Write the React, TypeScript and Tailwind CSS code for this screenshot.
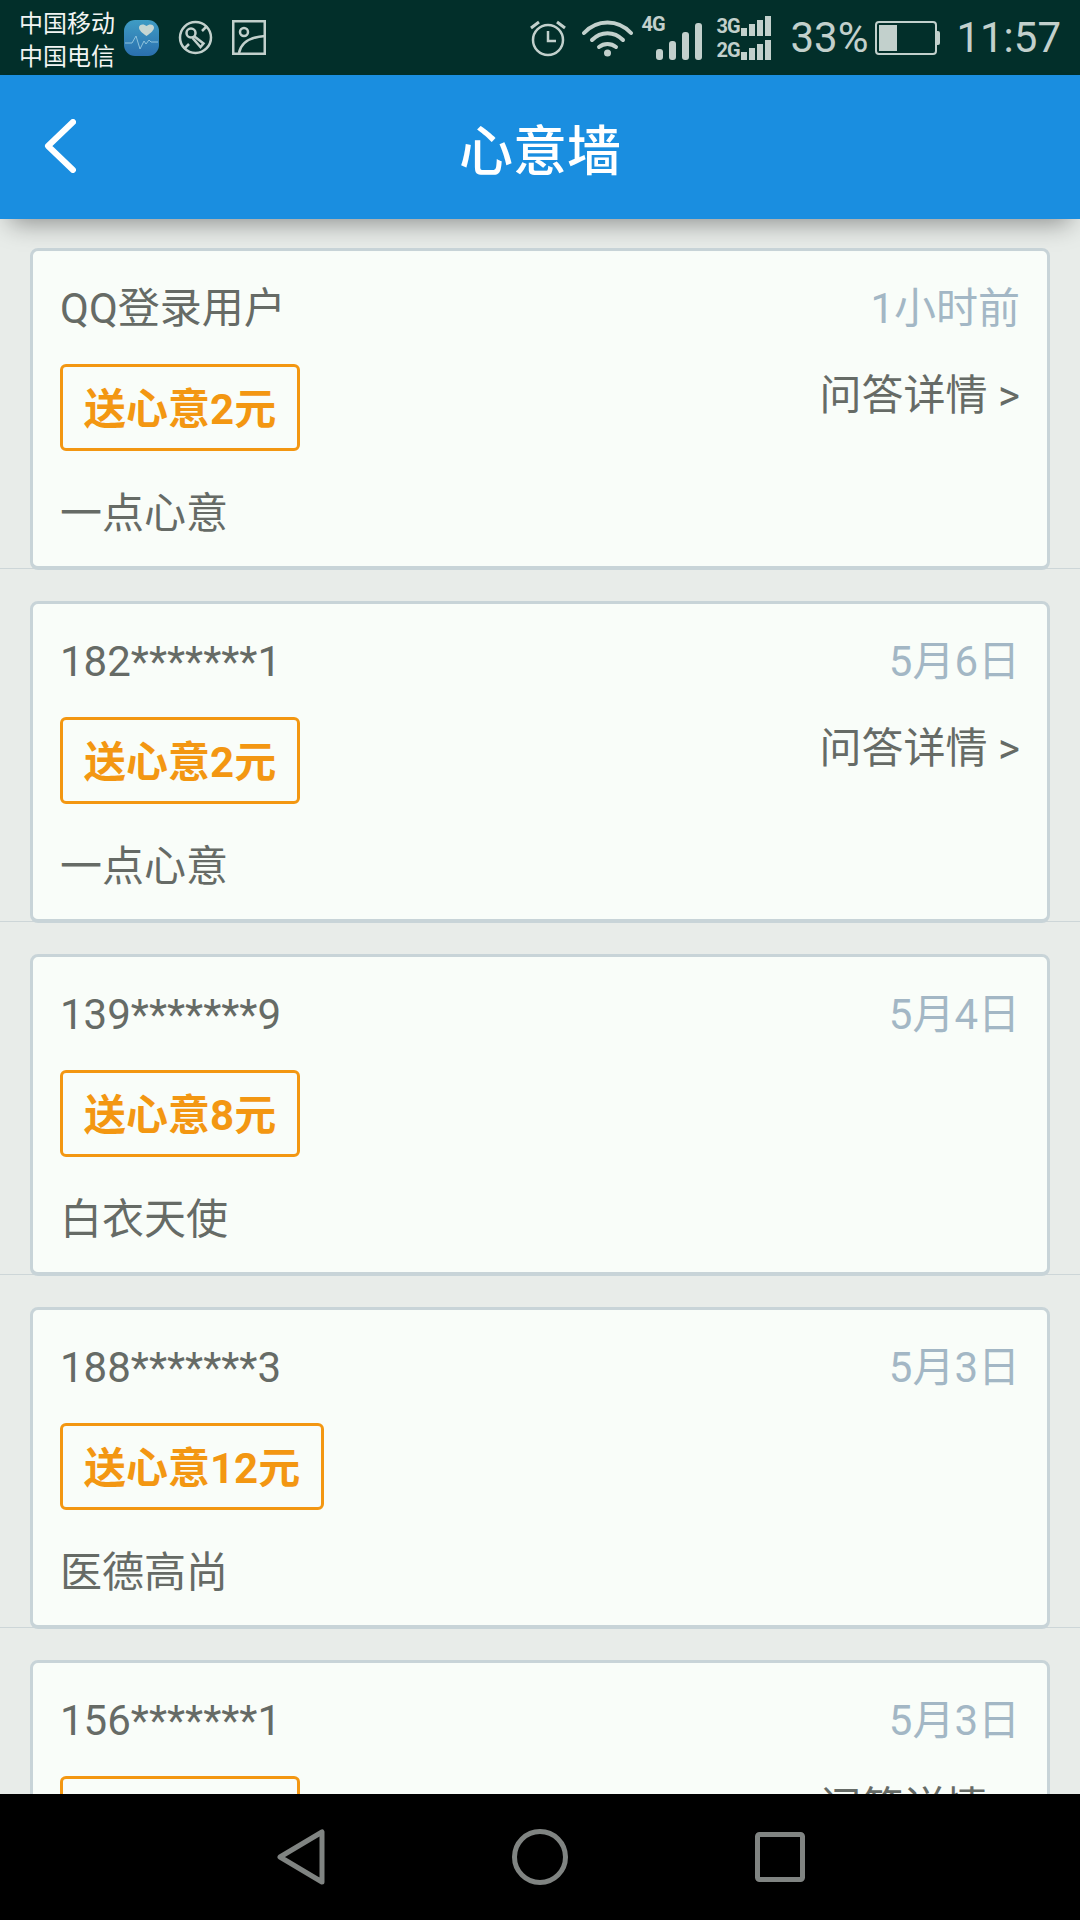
interface Thanks {
	name: string;
	time: string;
	amount: number;
	message: string;
	hasDetail: boolean;
}

const items: Thanks[] = [
	{ name: "QQ登录用户", time: "1小时前", amount: 2, message: "一点心意", hasDetail: true },
	{ name: "182*******1", time: "5月6日", amount: 2, message: "一点心意", hasDetail: true },
	{ name: "139*******9", time: "5月4日", amount: 8, message: "白衣天使", hasDetail: false },
	{ name: "188*******3", time: "5月3日", amount: 12, message: "医德高尚", hasDetail: false },
	{ name: "156*******1", time: "5月3日", amount: 2, message: "一点心意", hasDetail: true },
];

function HealthIcon() {
	return (
		<svg width="35" height="36" viewBox="0 0 35 36">
			<defs>
				<linearGradient id="health" x1="0" y1="0" x2="0" y2="1">
					<stop offset="0" stopColor="#3f9cc4" />
					<stop offset="1" stopColor="#2a6fae" />
				</linearGradient>
			</defs>
			<rect width="35" height="36" rx="11" fill="url(#health)" />
			<path d="M22.500 16c-5-3.500-7.500-6-7.500-8.500 0-3.500 5-4 7.500-1.500 2.500-2.500 7.500-2 7.500 1.500 0 2.500-2.500 5-7.500 8.500z" fill="#c6d6d2" />
			<path d="M1 23h7l4-7 4 13 4-8 2 3 3-4 2 2h7" fill="none" stroke="#8fc3dd" strokeWidth="1" />
		</svg>
	);
}

function KeyIcon() {
	return (
		<svg width="35" height="35" viewBox="0 0 35 35" fill="none" stroke="#c2d0cc" strokeWidth="2.500">
			<circle cx="17.500" cy="17.500" r="15.500" />
			<circle cx="13" cy="13" r="4.500" />
			<path d="M16.500 16.500l9 7-3 3.500-8-9M6 29l5-5M24 11l5-5" />
		</svg>
	);
}

function PictureIcon() {
	return (
		<svg width="34" height="35" viewBox="0 0 34 35" fill="none" stroke="#c2d0cc" strokeWidth="2.500">
			<rect x="1.250" y="1.250" width="31.500" height="32.500" />
			<circle cx="12" cy="12" r="4" />
			<path d="M7 33c2-10 10-16 26-17" />
		</svg>
	);
}

function AlarmIcon() {
	return (
		<svg width="36" height="38" viewBox="0 0 36 38" fill="none" stroke="#c2d0cc" strokeWidth="2.500">
			<circle cx="18" cy="21" r="15" />
			<path d="M18 12v10h8" />
			<path d="M1 9l8-6M35 9l-8-6" strokeWidth="3" />
		</svg>
	);
}

function WifiIcon() {
	return (
		<svg width="51" height="38" viewBox="0 0 51 38" fill="none" stroke="#c2d0cc" strokeWidth="4" strokeLinecap="round">
			<path d="M2 14c13-14 34-14 47 0" />
			<path d="M10 21c9-9 22-9 31 0" />
			<path d="M17 28c5-4 12-4 17 0" />
			<circle cx="25.500" cy="34" r="3.500" fill="#c2d0cc" stroke="none" />
		</svg>
	);
}

function BackIcon() {
	return (
		<svg width="32" height="54" viewBox="0 0 32 54" fill="none" stroke="#ffffff" strokeWidth="6" strokeLinecap="round" strokeLinejoin="round">
			<path d="M29 3L4 27l25 24" />
		</svg>
	);
}

function SmallBars() {
	return (
		<div className="flex items-end gap-[2px]">
			<span className="h-[8px] w-[6px] bg-[#c2d0cc]" />
			<span className="h-[12px] w-[6px] bg-[#c2d0cc]" />
			<span className="h-[16px] w-[6px] bg-[#c2d0cc]" />
			<span className="h-[20px] w-[6px] bg-[#c2d0cc]" />
		</div>
	);
}

function StatusBar() {
	return (
		<div className="flex h-[75px] shrink-0 items-center bg-[#022f2a] pl-[19px] pr-[19px] font-['Roboto',sans-serif]">
			<div className="flex w-[105px] flex-col text-[24px] leading-[33px] text-[#f2f5f3] font-['Noto_Sans_CJK_SC',sans-serif]">
				<span>中国移动</span>
				<span>中国电信</span>
			</div>
			<div className="flex items-center gap-[19px]">
				<HealthIcon />
				<KeyIcon />
				<PictureIcon />
			</div>
			<div className="ml-auto flex items-center text-[#c2d0cc]">
				<AlarmIcon />
				<div className="ml-[16px]">
					<WifiIcon />
				</div>
				<div className="relative ml-[10px] flex h-[44px] w-[59px] items-end justify-end">
					<span className="absolute left-[-2px] top-[-2px] text-[20px] font-bold leading-[20px] tracking-[-1px]">4G</span>
					<div className="flex items-end gap-[6px]">
						<span className="h-[11px] w-[7px] rounded-[3px] bg-[#c2d0cc]" />
						<span className="h-[19px] w-[7px] rounded-[3px] bg-[#c2d0cc]" />
						<span className="h-[28px] w-[7px] rounded-[3px] bg-[#c2d0cc]" />
						<span className="h-[37px] w-[7px] rounded-[3px] bg-[#c2d0cc]" />
					</div>
				</div>
				<div className="ml-[14px] flex flex-col gap-[4px]">
					<div className="flex items-end">
						<span className="w-[25px] text-[20px] font-bold leading-[19px] tracking-[-1px]">3G</span>
						<SmallBars />
					</div>
					<div className="flex items-end">
						<span className="w-[25px] text-[20px] font-bold leading-[19px] tracking-[-1px]">2G</span>
						<SmallBars />
					</div>
				</div>
				<span className="ml-[19px] text-[42px] leading-none">33%</span>
				<div className="ml-[7px] flex items-center">
					<div className="flex h-[34px] w-[62px] items-center rounded-[4px] border-[2px] border-[#c2d0cc] p-[2px]">
						<div className="h-full w-[18px] bg-[#c2d0cc]" />
					</div>
					<div className="h-[14px] w-[3px] rounded-r-[2px] bg-[#c2d0cc]" />
				</div>
				<span className="ml-[16px] text-[42px] leading-none">11:57</span>
			</div>
		</div>
	);
}

function Header() {
	return (
		<div className="relative z-10 flex h-[144px] shrink-0 items-center justify-center bg-[#1a8ee0] shadow-[0_14px_24px_-10px_rgba(0,0,0,0.4)]">
			<div className="absolute left-[44px] top-[44px]">
				<BackIcon />
			</div>
			<h1 className="text-[54px] font-medium text-white font-['Noto_Sans_CJK_SC',sans-serif]">心意墙</h1>
		</div>
	);
}

function Card({ item }: { item: Thanks }) {
	return (
		<div className="mb-[2px] shrink-0 border-b-[1px] border-[#cdd6d8] px-[30px] pt-[30px]">
			<div className="relative -mb-[2px] flex h-[322px] justify-between rounded-[8px] border-[3px] border-b-[4px] border-[#c8d4d8] bg-[#f9fdf9] px-[27px] pt-[30px]">
				<div className="flex flex-col items-start">
					<p className="text-[42px] leading-[56px] text-[#666b66]">{item.name}</p>
					<span className="mt-[27px] flex h-[87px] items-center rounded-[6px] border-[3px] border-[#f39712] px-[21px] pt-[4px] text-[42px] font-bold text-[#f39712]">
						送心意{item.amount}元
					</span>
					<p className="mt-[35px] text-[42px] leading-[56px] text-[#666b66]">{item.message}</p>
				</div>
				<div className="flex flex-col items-end">
					<p className="text-[42px] leading-[56px] text-[#a3b7c5]">{item.time}</p>
					{item.hasDetail && (
						<p className="mt-[31px] text-[42px] leading-[56px] text-[#666b66]">问答详情 &gt;</p>
					)}
				</div>
			</div>
		</div>
	);
}

function NavBar() {
	return (
		<div className="relative flex h-[126px] shrink-0 items-center justify-center gap-[187px] bg-black pl-[2px]">
			<svg width="48" height="56" viewBox="0 0 48 56" fill="none" stroke="#808482" strokeWidth="5" strokeLinejoin="round">
				<path d="M45 3v50L3 28z" />
			</svg>
			<svg width="56" height="56" viewBox="0 0 56 56" fill="none" stroke="#808482" strokeWidth="5">
				<circle cx="28" cy="28" r="25.500" />
			</svg>
			<svg width="50" height="50" viewBox="0 0 50 50" fill="none" stroke="#808482" strokeWidth="5" strokeLinejoin="round">
				<rect x="2.500" y="2.500" width="45" height="45" rx="2" />
			</svg>
		</div>
	);
}

export default function App() {
	return (
		<div className="flex h-[1920px] w-[1080px] flex-col overflow-hidden bg-[#e8ece9] font-['Roboto','Noto_Sans_CJK_SC',sans-serif]">
			<StatusBar />
			<Header />
			<div className="-mt-[1px] flex min-h-0 flex-1 flex-col overflow-hidden">
				{items.map((item) => (
					<Card key={item.name} item={item} />
				))}
			</div>
			<NavBar />
		</div>
	);
}
